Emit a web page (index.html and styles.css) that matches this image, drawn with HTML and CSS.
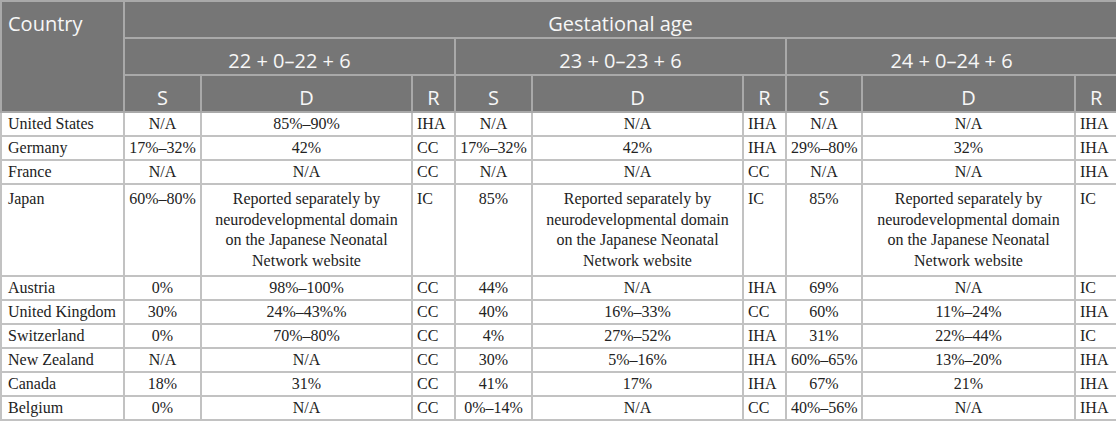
FILE: index.html
```html
<!DOCTYPE html>
<html lang="en">
<head>
<meta charset="utf-8">
<title>Gestational age outcomes by country</title>
<link rel="stylesheet" href="styles.css">
</head>
<body>
<table class="data">
  <colgroup>
    <col class="w-country">
    <col class="w-s"><col class="w-d"><col class="w-r">
    <col class="w-s"><col class="w-d"><col class="w-r">
    <col class="w-s3"><col class="w-d3"><col class="w-r3">
  </colgroup>
  <thead>
    <tr class="h1">
      <th rowspan="3" class="country-head">Country</th>
      <th colspan="9">Gestational age</th>
    </tr>
    <tr class="h2">
      <th colspan="3">22 + 0–22 + 6</th>
      <th colspan="3">23 + 0–23 + 6</th>
      <th colspan="3">24 + 0–24 + 6</th>
    </tr>
    <tr class="h3">
      <th>S</th><th>D</th><th>R</th>
      <th>S</th><th>D</th><th>R</th>
      <th>S</th><th>D</th><th>R</th>
    </tr>
  </thead>
  <tbody>
    <tr><td>United States</td><td class="c">N/A</td><td class="c">85%–90%</td><td>IHA</td><td class="c">N/A</td><td class="c">N/A</td><td>IHA</td><td class="c">N/A</td><td class="c">N/A</td><td>IHA</td></tr>
    <tr><td>Germany</td><td class="c">17%–32%</td><td class="c">42%</td><td>CC</td><td class="c">17%–32%</td><td class="c">42%</td><td>IHA</td><td class="c">29%–80%</td><td class="c">32%</td><td>IHA</td></tr>
    <tr><td>France</td><td class="c">N/A</td><td class="c">N/A</td><td>CC</td><td class="c">N/A</td><td class="c">N/A</td><td>CC</td><td class="c">N/A</td><td class="c">N/A</td><td>IHA</td></tr>
    <tr class="tall"><td>Japan</td><td class="c">60%–80%</td><td class="c wrap">Reported separately by neurodevelopmental domain on the Japanese Neonatal Network website</td><td>IC</td><td class="c">85%</td><td class="c wrap">Reported separately by neurodevelopmental domain on the Japanese Neonatal Network website</td><td>IC</td><td class="c">85%</td><td class="c wrap">Reported separately by neurodevelopmental domain on the Japanese Neonatal Network website</td><td>IC</td></tr>
    <tr><td>Austria</td><td class="c">0%</td><td class="c">98%–100%</td><td>CC</td><td class="c">44%</td><td class="c">N/A</td><td>IHA</td><td class="c">69%</td><td class="c">N/A</td><td>IC</td></tr>
    <tr><td>United Kingdom</td><td class="c">30%</td><td class="c">24%–43%%</td><td>CC</td><td class="c">40%</td><td class="c">16%–33%</td><td>CC</td><td class="c">60%</td><td class="c">11%–24%</td><td>IHA</td></tr>
    <tr><td>Switzerland</td><td class="c">0%</td><td class="c">70%–80%</td><td>CC</td><td class="c">4%</td><td class="c">27%–52%</td><td>IHA</td><td class="c">31%</td><td class="c">22%–44%</td><td>IC</td></tr>
    <tr><td>New Zealand</td><td class="c">N/A</td><td class="c">N/A</td><td>CC</td><td class="c">30%</td><td class="c">5%–16%</td><td>IHA</td><td class="c">60%–65%</td><td class="c">13%–20%</td><td>IHA</td></tr>
    <tr><td>Canada</td><td class="c">18%</td><td class="c">31%</td><td>CC</td><td class="c">41%</td><td class="c">17%</td><td>IHA</td><td class="c">67%</td><td class="c">21%</td><td>IHA</td></tr>
    <tr><td>Belgium</td><td class="c">0%</td><td class="c">N/A</td><td>CC</td><td class="c">0%–14%</td><td class="c">N/A</td><td>CC</td><td class="c">40%–56%</td><td class="c">N/A</td><td>IHA</td></tr>
  </tbody>
</table>
</body>
</html>
```

FILE: styles.css
```css
html, body {
  margin: 0;
  padding: 0;
  background: #ffffff;
}

.data {
  border-collapse: collapse;
  table-layout: fixed;
  width: 1116px;
  font-family: "Liberation Serif", "Times New Roman", serif;
  font-size: 16px;
  color: #222222;
}

.w-country { width: 123px; }
.w-s { width: 77px; }
.w-d { width: 211px; }
.w-r { width: 43px; }
.w-s3 { width: 76px; }
.w-d3 { width: 213px; }
.w-r3 { width: 42px; }

.data th {
  background: #767676;
  color: #f7f7f7;
  font-family: "Open Sans", "Liberation Sans", sans-serif;
  font-weight: 400;
  font-size: 20px;
  line-height: 24px;
  border: 2px solid #a9a9a9;
  padding: 10px 6px 1px;
  vertical-align: bottom;
  text-align: center;
  white-space: nowrap;
}

.data th.country-head {
  text-align: left;
  vertical-align: top;
  padding: 10px 6px 0;
}

.data td {
  border: 2px solid #c2c2c2;
  padding: 1px 4px;
  line-height: 20px;
  vertical-align: top;
  text-align: left;
  white-space: nowrap;
}

.data td:first-child {
  padding-left: 6px;
}

.data td.c {
  text-align: center;
}

.data tr.tall td {
  padding-top: 4px;
  padding-bottom: 4px;
  line-height: 20.5px;
}

.data td.wrap {
  white-space: normal;
  padding-left: 8px;
  padding-right: 8px;
}
```
